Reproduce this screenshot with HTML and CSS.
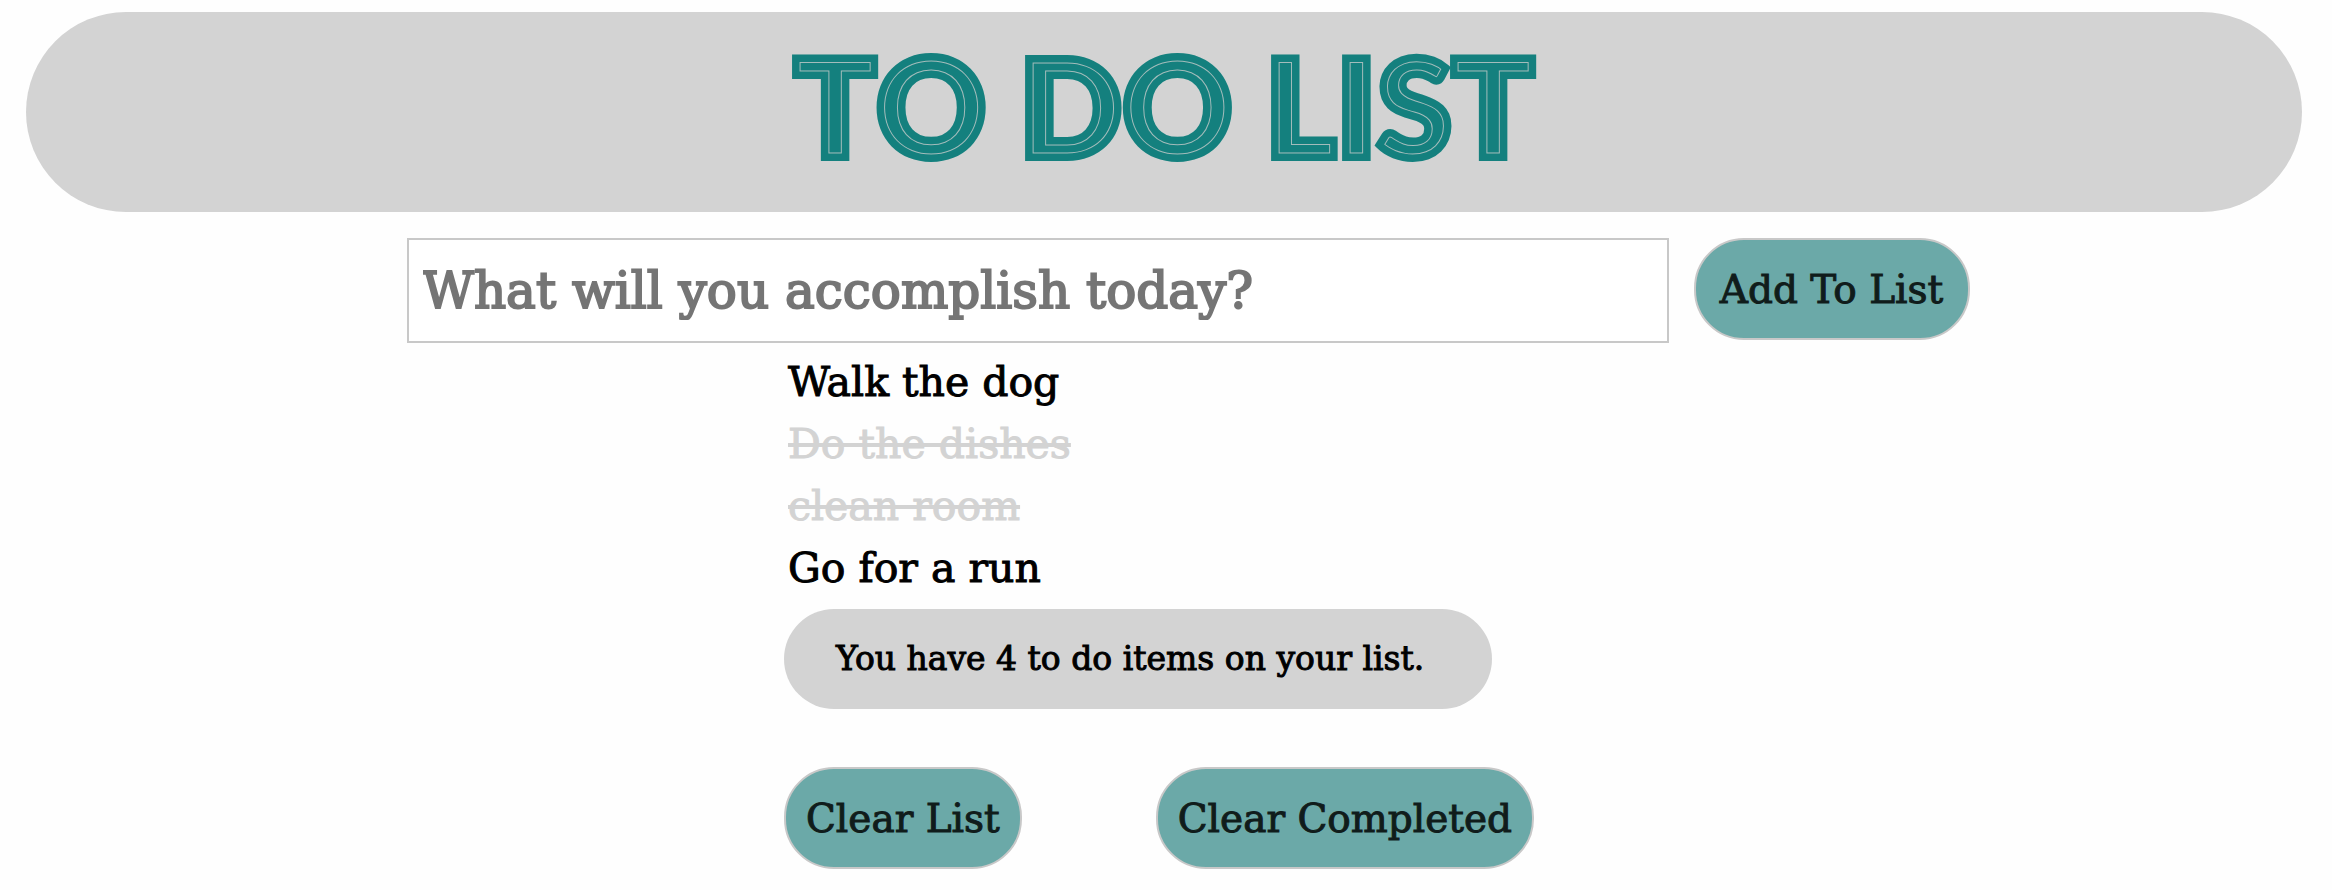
FILE: index.html
```html
<!DOCTYPE html>
<html lang="en">
<head>
<meta charset="utf-8">
<title>To Do List</title>
<link rel="stylesheet" href="styles.css">
</head>
<body>
<header class="banner">
  <h1 class="banner-title">
    <svg class="logo" viewBox="0 0 800 180" role="img" aria-label="TO DO LIST">
      <defs>
        <mask id="letters" maskUnits="userSpaceOnUse" x="0" y="0" width="800" height="180">
          <use href="#title" class="logo-mask"/>
        </mask>
      </defs>
      <g class="logo-base"><text id="title" x="400" y="135" text-anchor="middle">TO DO LIST</text></g>
      <g mask="url(#letters)">
        <use href="#title" class="logo-core"/>
        <use href="#title" class="ring ring-inner"/>
        <use href="#title" class="ring ring-line"/>
        <use href="#title" class="ring ring-outer"/>
      </g>
    </svg>
  </h1>
</header>
<main>
  <form class="entry">
    <input class="entry-field" type="text" aria-label="New to do item" placeholder="What will you accomplish today?">
    <button class="btn btn-add" type="button">Add To List</button>
  </form>
  <section class="todo">
    <ul class="items">
      <li>Walk the dog</li>
      <li class="done">Do the dishes</li>
      <li class="done">clean room</li>
      <li>Go for a run</li>
    </ul>
    <p class="summary">You have 4 to do items on your list.</p>
    <div class="actions">
      <button class="btn" type="button">Clear List</button>
      <button class="btn" type="button">Clear Completed</button>
    </div>
  </section>
</main>
</body>
</html>
```
FILE: styles.css
```css
* { box-sizing: border-box; }
body {
  margin: 12px 30px 20px 26px;
  background: #fefefe;
  color: #000;
  font-family: "DejaVu Serif", serif;
  font-size: 41px;
  -webkit-text-stroke: 1px currentColor;
}
.banner {
  display: flex;
  justify-content: center;
  padding: 10px 0;
  border-radius: 100px;
  background: #d3d3d3;
}
.banner-title { margin: 0; }
.logo {
  display: block;
  width: 800px;
  height: 180px;
  font-family: Lato, sans-serif;
  font-size: 136px;
  font-weight: 900;
  font-kerning: none;
  -webkit-text-stroke: 0;
}
.logo-base { fill: #14807e; stroke: #14807e; stroke-width: 8px; }
.logo-mask { fill: #fff; stroke: none; }
.logo-core { fill: #a3bcbb; stroke: none; }
.ring { fill: none; stroke: #14807e; }
.ring-inner { stroke-width: 22px; }
.ring-line { stroke: #a3bcbb; stroke-width: 9px; }
.ring-outer { stroke-width: 7px; }
.entry {
  display: flex;
  align-items: flex-start;
  justify-content: center;
  gap: 25px;
  padding: 26px 0 0 48px;
}
.entry-field {
  width: 1262px;
  height: 105px;
  padding: 0 14px;
  border: 2px solid #c8c8c8;
  background: #fff;
  font: 50px "DejaVu Serif", serif;
  -webkit-text-stroke: inherit;
}
.entry-field::placeholder {
  color: #757575;
  opacity: 1;
  -webkit-text-stroke: 2px #757575;
}
.btn {
  height: 102px;
  padding: 0 20px;
  border: 2px solid #c8c8c8;
  border-radius: 50px;
  background: #6ba9a8;
  color: #101c1b;
  font: 39px "DejaVu Serif", serif;
  -webkit-text-stroke: 1px #101c1b;
  white-space: nowrap;
}
.btn-add { min-width: 276px; }
.todo { width: 760px; margin: 8px auto 0; padding-right: 10px; }
.items { margin: 0; padding: 0 4px; list-style: none; line-height: 62px; }
.done {
  color: #d3d3d3;
  text-decoration: line-through 4px;
  -webkit-text-stroke: 1px #d3d3d3;
}
.summary {
  width: 708px;
  margin: 10px 0 58px;
  padding-left: 52px;
  border-radius: 50px;
  background: #d3d3d3;
  font-size: 33px;
  line-height: 100px;
}
.actions { display: flex; justify-content: space-between; }
```
